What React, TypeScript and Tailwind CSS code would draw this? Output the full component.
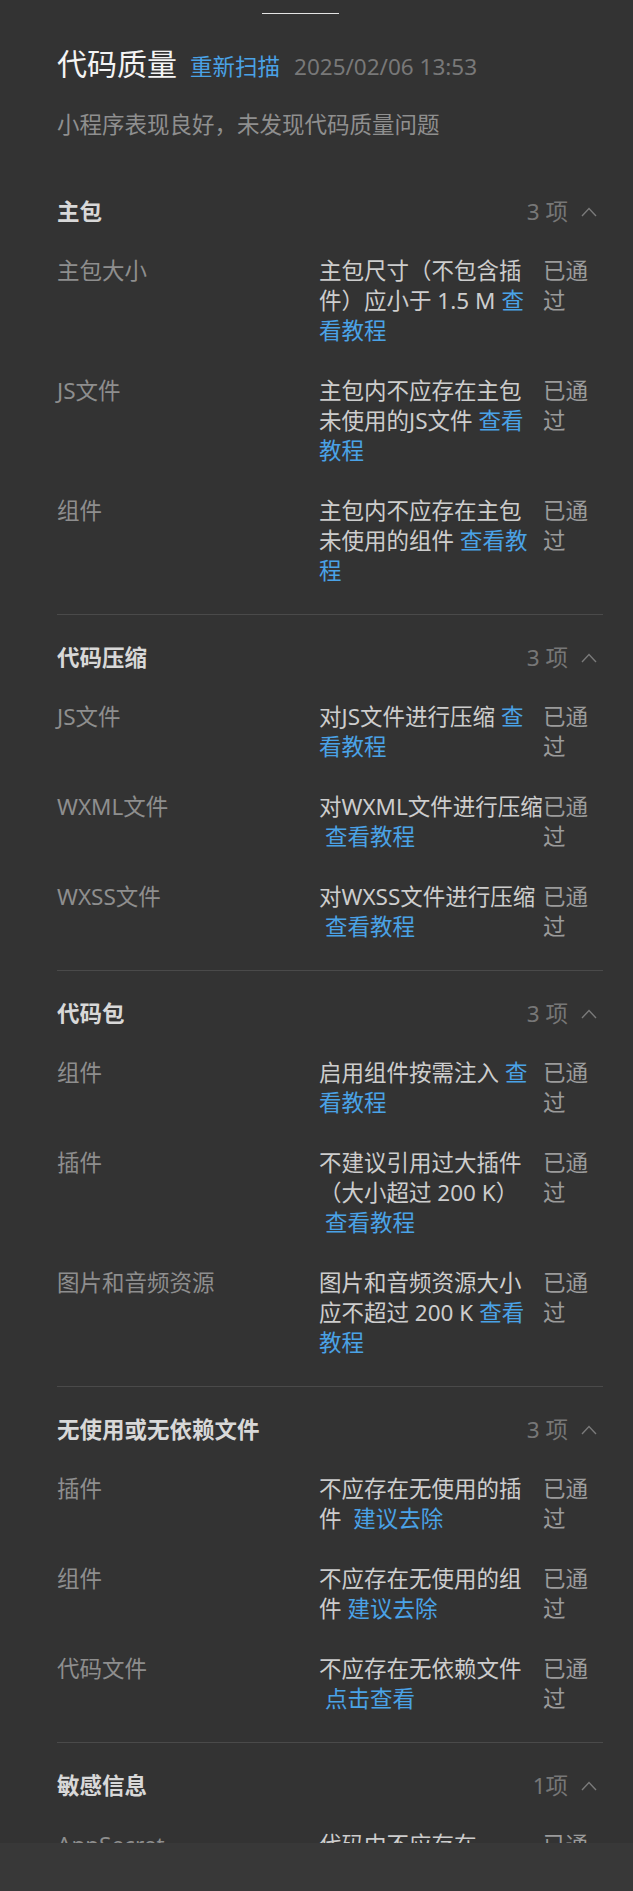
import React from 'react';

type Row = { name: string; desc: string; link: string };
type Section = { title: string; count: string; rows: Row[] };

// line breaks follow the reference panel width
const sections: Section[] = [
  {
    title: '主包',
    count: '3 项',
    rows: [
      { name: '主包大小', desc: '主包尺寸（不包含插\n件）应小于 1.5 M', link: '查\n看教程' },
      { name: 'JS文件', desc: '主包内不应存在主包\n未使用的JS文件', link: '查看\n教程' },
      { name: '组件', desc: '主包内不应存在主包\n未使用的组件', link: '查看教\n程' },
    ],
  },
  {
    title: '代码压缩',
    count: '3 项',
    rows: [
      { name: 'JS文件', desc: '对JS文件进行压缩', link: '查\n看教程' },
      { name: 'WXML文件', desc: '对WXML文件进行压缩\n', link: '查看教程' },
      { name: 'WXSS文件', desc: '对WXSS文件进行压缩\n', link: '查看教程' },
    ],
  },
  {
    title: '代码包',
    count: '3 项',
    rows: [
      { name: '组件', desc: '启用组件按需注入', link: '查\n看教程' },
      { name: '插件', desc: '不建议引用过大插件\n（大小超过 200 K）\n', link: '查看教程' },
      { name: '图片和音频资源', desc: '图片和音频资源大小\n应不超过 200 K', link: '查看\n教程' },
    ],
  },
  {
    title: '无使用或无依赖文件',
    count: '3 项',
    rows: [
      { name: '插件', desc: '不应存在无使用的插\n件 ', link: '建议去除' },
      { name: '组件', desc: '不应存在无使用的组\n件', link: '建议去除' },
      { name: '代码文件', desc: '不应存在无依赖文件\n', link: '点击查看' },
    ],
  },
  {
    title: '敏感信息',
    count: '1项',
    rows: [{ name: 'AppSecret', desc: '代码中不应存在\nAppSecret', link: '查看详情' }],
  },
];

function ChevronUp() {
  return (
    <svg width="16" height="10" viewBox="0 0 16 10" fill="none" className="ml-[13px]">
      <path d="M1 9 L8 1.5 L15 9" stroke="#7a7a7a" strokeWidth="1.4" />
    </svg>
  );
}

function CheckRow({ row }: { row: Row }) {
  return (
    <div className="grid grid-cols-[262px_224px_1fr] leading-[30px]">
      <div className="text-[#8e8e8e]">{row.name}</div>
      <div className="whitespace-pre-line text-[#cdcdcd]">
        {row.desc}
        <span className="ml-[6px] text-[#4aa2e6]">{row.link}</span>
      </div>
      <div className="text-[#9b9b9b]">已通过</div>
    </div>
  );
}

function CheckSection({ section }: { section: Section }) {
  return (
    <section className="border-b border-[#4a4a4a] pt-[28px] pb-[28px]">
      <div className="mb-[29px] flex h-[30px] items-center justify-between">
        <h2 className="text-[22.5px] leading-[30px] font-bold text-[#d8d8d8]">{section.title}</h2>
        <div className="flex items-center pr-[6px] text-[#777777]">
          <span>{section.count}</span>
          <ChevronUp />
        </div>
      </div>
      <div className="flex flex-col gap-[30px]">
        {section.rows.map((row) => (
          <CheckRow key={section.title + row.name} row={row} />
        ))}
      </div>
    </section>
  );
}

export default function App() {
  return (
    <div className="flex h-[1891px] w-full flex-col overflow-hidden bg-[#333333] font-['Noto_Sans','Noto_Sans_CJK_SC',sans-serif] text-[22.5px]">
      <div className="h-[1843px] shrink-0 overflow-hidden">
        <div className="ml-[262px] mt-[13px] h-px w-[77px] bg-[#e4e4e4]" />
        <div className="pl-[57px] pr-[30px]">
          <div className="mt-[29px] flex items-baseline">
            <h1 className="text-[30px] leading-[42px] text-[#f4f4f4]">代码质量</h1>
            <span className="ml-[13px] text-[#4aa2e6]">重新扫描</span>
            <span className="ml-[14px] text-[#787878]">2025/02/06 13:53</span>
          </div>
          <p className="mt-[25px] mb-[29px] leading-[30px] text-[#8f8f8f]">小程序表现良好，未发现代码质量问题</p>
          {sections.map((s) => (
            <CheckSection key={s.title} section={s} />
          ))}
        </div>
      </div>
      <div className="h-[48px] shrink-0 bg-[#383838]" />
    </div>
  );
}
